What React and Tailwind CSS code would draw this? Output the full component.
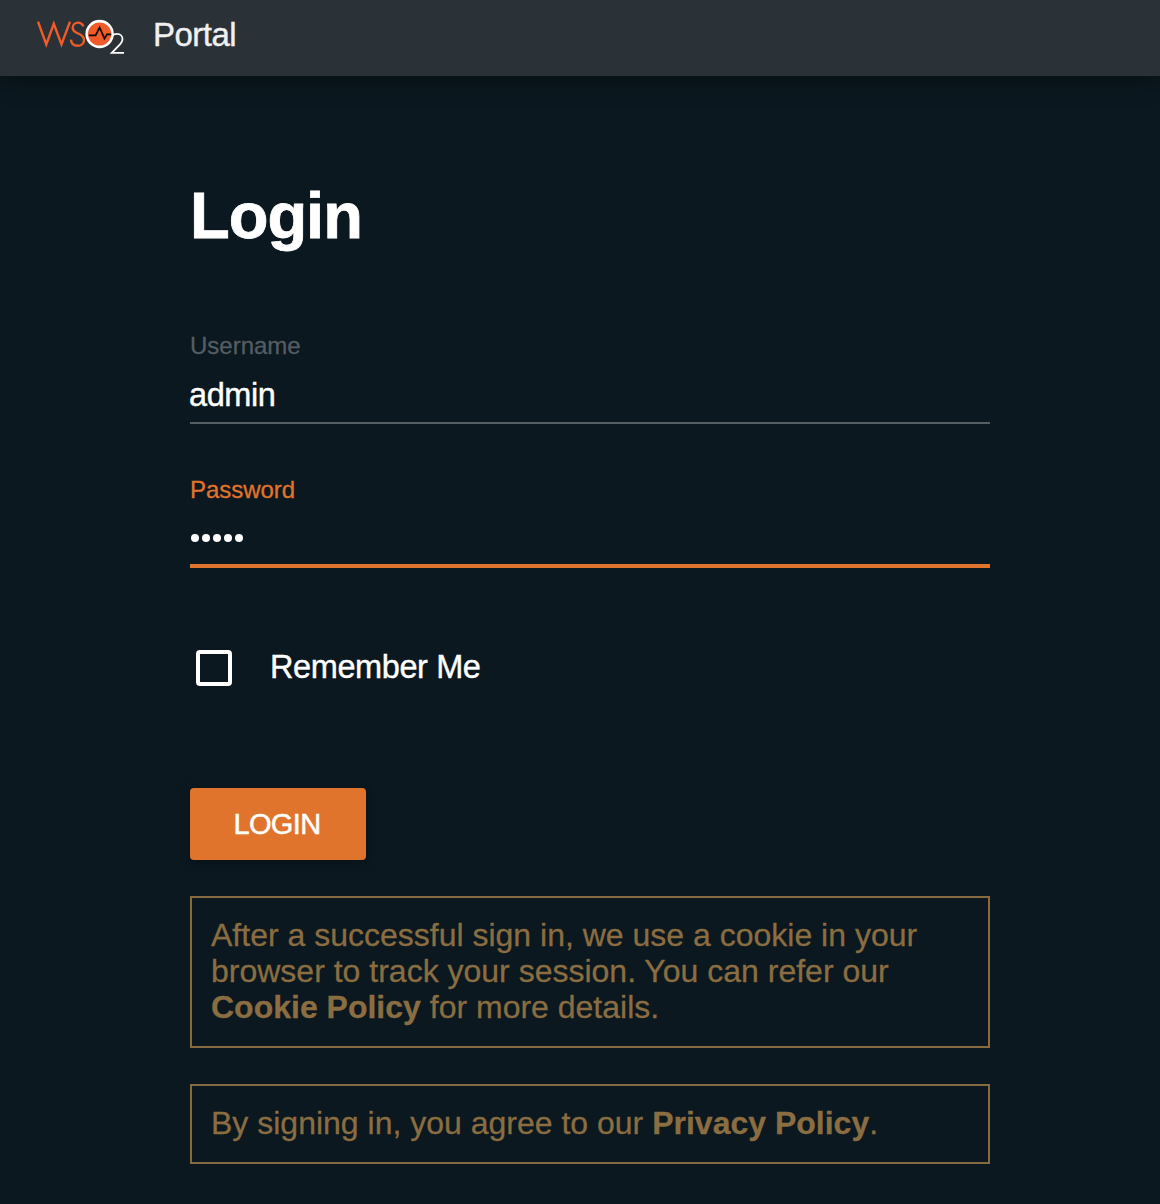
function Logo() {
  return (
    <svg className="mt-[16px] shrink-0" width="92" height="44" viewBox="36 16 92 44" fill="none">
      <path d="M38 21.6L46.3 44.4L53.8 23.8L61.5 44.4L70 21.6" stroke="#f15b29" strokeWidth="2.4" strokeMiterlimit="10" />
      <path
        d="M83.4 26.4C82.3 23.8 80.5 22.6 78.2 22.6C75 22.6 72.7 24.8 72.7 27.7C72.7 30.8 75 32.2 78.2 33.5C81.8 35 84 36.4 84 39.9C84 43.4 81.2 45.8 77.6 45.8C73.9 45.8 71.3 43.5 70.9 39.7"
        stroke="#f15b29"
        strokeWidth="2.4"
      />
      <circle cx="99.6" cy="34" r="12.9" fill="#f15b29" stroke="#fff" strokeWidth="2.6" />
      <path d="M88.8 35.3H95.6L99.6 27.5L104.5 38.6L107 34.4H111.3" stroke="#0b0b0b" strokeWidth="1.8" />
      <path d="M112.6 35.6C113.5 34.4 115.1 33.9 117 33.9C120.2 33.9 122.5 36 122.5 38.9C122.5 41.5 121 43.4 118.3 46.2L111.8 52.9H124" stroke="#fff" strokeWidth="1.8" />
    </svg>
  );
}

export default function App() {
  return (
    <div className="h-[1204px] w-[1160px] overflow-hidden bg-[#0b181f] font-['Liberation_Sans',Arial,sans-serif] text-white">
      <header className="flex h-[76px] items-start bg-[#2a3238] pl-[36px] shadow-[0_2px_24px_rgba(0,0,0,0.45)]">
        <Logo />
        <span className="mt-[16px] ml-[25px] text-[33px] leading-[38px] tracking-[-0.5px] text-[#f0f0f0] [-webkit-text-stroke:0.4px_#f0f0f0]">
          Portal
        </span>
      </header>
      <main className="ml-[190px] w-[800px]">
        <h1 className="mt-[103px] text-[65px] leading-[74px] font-bold tracking-[-1px] [-webkit-text-stroke:0.8px_white]">Login</h1>

        <label className="mt-[79px] block text-[24px] leading-[28px] text-[#545d62] [-webkit-text-stroke:0.3px_#545d62]">
          Username
        </label>
        <div className="mt-[17px] h-[47px] border-b-2 border-[#545d61] text-[32.5px] leading-[36px] tracking-[-0.4px] [-webkit-text-stroke:0.4px_white]">
          <span className="-ml-px">admin</span>
        </div>

        <label className="mt-[52px] block text-[24px] leading-[28px] tracking-[-0.05px] text-[#e0742c] [-webkit-text-stroke:0.3px_#e0742c]">
          Password
        </label>
        <div className="mt-[16px] flex h-[48px] gap-[3.2px] border-b-4 border-[#e0742c] pt-[14px] pl-[0.7px]">
          {[0, 1, 2, 3, 4].map((i) => (
            <svg key={i} className="size-[8px]" viewBox="0 0 8 8">
              <circle cx="4" cy="4" r="4" fill="#fff" />
            </svg>
          ))}
        </div>

        <div className="mt-[82px] flex h-[36px] items-start pl-[6px]">
          <span className="size-[36px] shrink-0 rounded-[4px] border-4 border-white" />
          <span className="-mt-[1px] ml-[38px] text-[32.5px] leading-[36px] tracking-[-0.4px] [-webkit-text-stroke:0.4px_white]">
            Remember Me
          </span>
        </div>

        <button className="mt-[102px] block h-[72px] w-[176px] rounded-[4px] bg-[#e0742c] pr-[2px] text-[29px] leading-[72px] tracking-[-0.6px] text-white shadow-[0_2px_10px_rgba(0,0,0,0.3)] [-webkit-text-stroke:0.5px_white]">
          LOGIN
        </button>

        <p className="mt-[36px] h-[152px] border-2 border-[#876b40] px-[19px] pt-[19px] text-[32px] leading-[36px] whitespace-nowrap text-[#8a6d41] [-webkit-text-stroke:0.3px_#8a6d41]">
          After a successful sign in, we use a cookie in your
          <br />
          browser to track your session. You can refer our
          <br />
          <b>Cookie Policy</b> for more details.
        </p>
        <p className="mt-[36px] h-[80px] border-2 border-[#876b40] px-[19px] pt-[19px] text-[32px] leading-[36px] whitespace-nowrap text-[#8a6d41] [-webkit-text-stroke:0.3px_#8a6d41]">
          By signing in, you agree to our <b>Privacy Policy</b>.
        </p>
      </main>
    </div>
  );
}
